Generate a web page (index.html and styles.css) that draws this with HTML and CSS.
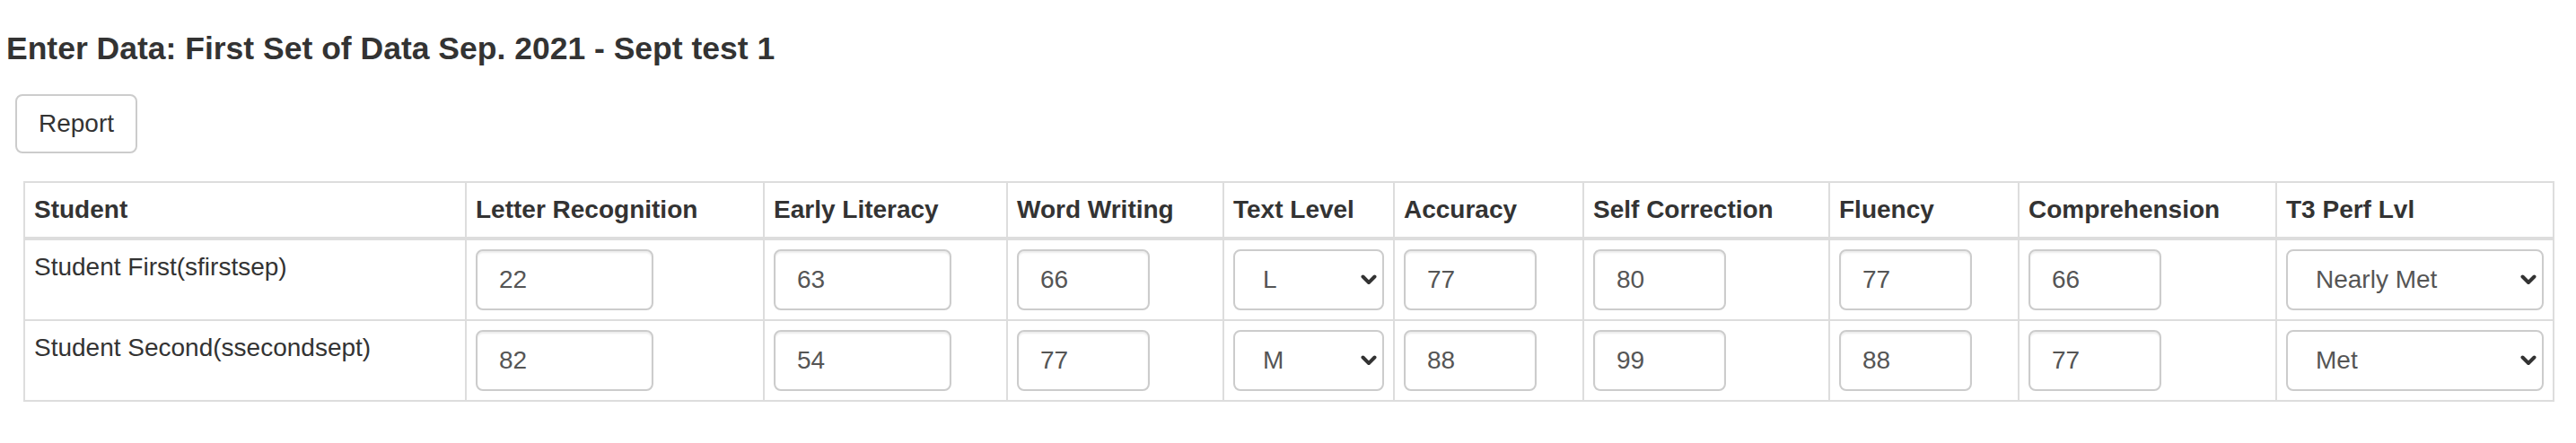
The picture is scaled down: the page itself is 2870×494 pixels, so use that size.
FILE: index.html
```html
<!DOCTYPE html>
<html lang="en">
<head>
<meta charset="utf-8">
<title>Enter Data</title>
<link rel="stylesheet" href="styles.css">
</head>
<body>
<div class="page">
  <h4 class="title">Enter Data: First Set of Data Sep. 2021 - Sept test 1</h4>
  <button class="btn" type="button">Report</button>
  <table class="grid">
    <colgroup>
      <col class="c-student">
      <col class="c-lr">
      <col class="c-el">
      <col class="c-ww">
      <col class="c-tl">
      <col class="c-acc">
      <col class="c-sc">
      <col class="c-flu">
      <col class="c-comp">
      <col class="c-t3">
    </colgroup>
    <thead>
      <tr>
        <th>Student</th>
        <th>Letter Recognition</th>
        <th>Early Literacy</th>
        <th>Word Writing</th>
        <th>Text Level</th>
        <th>Accuracy</th>
        <th>Self Correction</th>
        <th>Fluency</th>
        <th>Comprehension</th>
        <th>T3 Perf Lvl</th>
      </tr>
    </thead>
    <tbody>
      <tr>
        <td>Student First(sfirstsep)</td>
        <td><input class="field wide" type="text" value="22"></td>
        <td><input class="field wide" type="text" value="63"></td>
        <td><input class="field" type="text" value="66"></td>
        <td><div class="select-wrap"><select class="field sel"><option>L</option><option>M</option></select><svg class="chev" viewBox="0 0 18 12" width="18" height="12"><path d="M2.5 2.5 L9 9 L15.5 2.5" fill="none" stroke="#333" stroke-width="4" stroke-linecap="round" stroke-linejoin="round"/></svg></div></td>
        <td><input class="field" type="text" value="77"></td>
        <td><input class="field" type="text" value="80"></td>
        <td><input class="field" type="text" value="77"></td>
        <td><input class="field" type="text" value="66"></td>
        <td><div class="select-wrap"><select class="field sel"><option>Nearly Met</option><option>Met</option></select><svg class="chev" viewBox="0 0 18 12" width="18" height="12"><path d="M2.5 2.5 L9 9 L15.5 2.5" fill="none" stroke="#333" stroke-width="4" stroke-linecap="round" stroke-linejoin="round"/></svg></div></td>
      </tr>
      <tr>
        <td>Student Second(ssecondsept)</td>
        <td><input class="field wide" type="text" value="82"></td>
        <td><input class="field wide" type="text" value="54"></td>
        <td><input class="field" type="text" value="77"></td>
        <td><div class="select-wrap"><select class="field sel"><option>M</option><option>L</option></select><svg class="chev" viewBox="0 0 18 12" width="18" height="12"><path d="M2.5 2.5 L9 9 L15.5 2.5" fill="none" stroke="#333" stroke-width="4" stroke-linecap="round" stroke-linejoin="round"/></svg></div></td>
        <td><input class="field" type="text" value="88"></td>
        <td><input class="field" type="text" value="99"></td>
        <td><input class="field" type="text" value="88"></td>
        <td><input class="field" type="text" value="77"></td>
        <td><div class="select-wrap"><select class="field sel"><option>Met</option><option>Nearly Met</option></select><svg class="chev" viewBox="0 0 18 12" width="18" height="12"><path d="M2.5 2.5 L9 9 L15.5 2.5" fill="none" stroke="#333" stroke-width="4" stroke-linecap="round" stroke-linejoin="round"/></svg></div></td>
      </tr>
    </tbody>
  </table>
</div>
</body>
</html>
```
FILE: styles.css
```css
* { box-sizing: border-box; }

html, body {
  margin: 0;
  padding: 0;
  background: #fff;
}

body {
  font-family: "Liberation Sans", Arial, Helvetica, sans-serif;
  font-size: 28px;
  line-height: 40px;
  color: #333;
}

.page {
  display: flex;
  flex-direction: column;
  align-items: flex-start;
  padding-top: 35px;
}

.title {
  margin: 0 0 0 7px;
  font-size: 35.5px;
  line-height: 38px;
  font-weight: bold;
  color: #333;
}

.btn {
  margin: 32px 0 0 17px;
  height: 66px;
  padding: 0 24px;
  font-family: inherit;
  font-size: 28px;
  line-height: 40px;
  color: #333;
  background: #fff;
  border: 2px solid #ccc;
  border-radius: 8px;
}

.grid {
  margin: 31px 0 0 26px;
  width: 2820px;
  table-layout: fixed;
  border-collapse: collapse;
  border: 2px solid #ddd;
}

.c-student { width: 492px; }
.c-lr { width: 332px; }
.c-el { width: 271px; }
.c-ww { width: 241px; }
.c-tl { width: 190px; }
.c-acc { width: 211px; }
.c-sc { width: 274px; }
.c-flu { width: 211px; }
.c-comp { width: 287px; }
.c-t3 { width: 309px; }

.grid th,
.grid td {
  padding: 10px;
  border: 2px solid #ddd;
  text-align: left;
  vertical-align: top;
  line-height: 40px;
}

.grid th {
  font-weight: bold;
  vertical-align: bottom;
  border-bottom-width: 4px;
}

.field {
  display: block;
  width: 148px;
  height: 68px;
  margin: 0;
  padding: 0 24px;
  font-family: inherit;
  font-size: 28px;
  line-height: 40px;
  color: #555;
  background: #fff;
  border: 2px solid #ccc;
  border-radius: 8px;
  box-shadow: inset 0 2px 2px rgba(0, 0, 0, 0.075);
  outline: none;
}

.field.wide { width: 198px; }

.select-wrap {
  position: relative;
  width: 100%;
}

.field.sel {
  width: 100%;
  padding: 0 36px 0 31px;
  -webkit-appearance: none;
  appearance: none;
  box-shadow: none;
}

.chev {
  position: absolute;
  right: 8px;
  top: 28px;
  pointer-events: none;
}
```
